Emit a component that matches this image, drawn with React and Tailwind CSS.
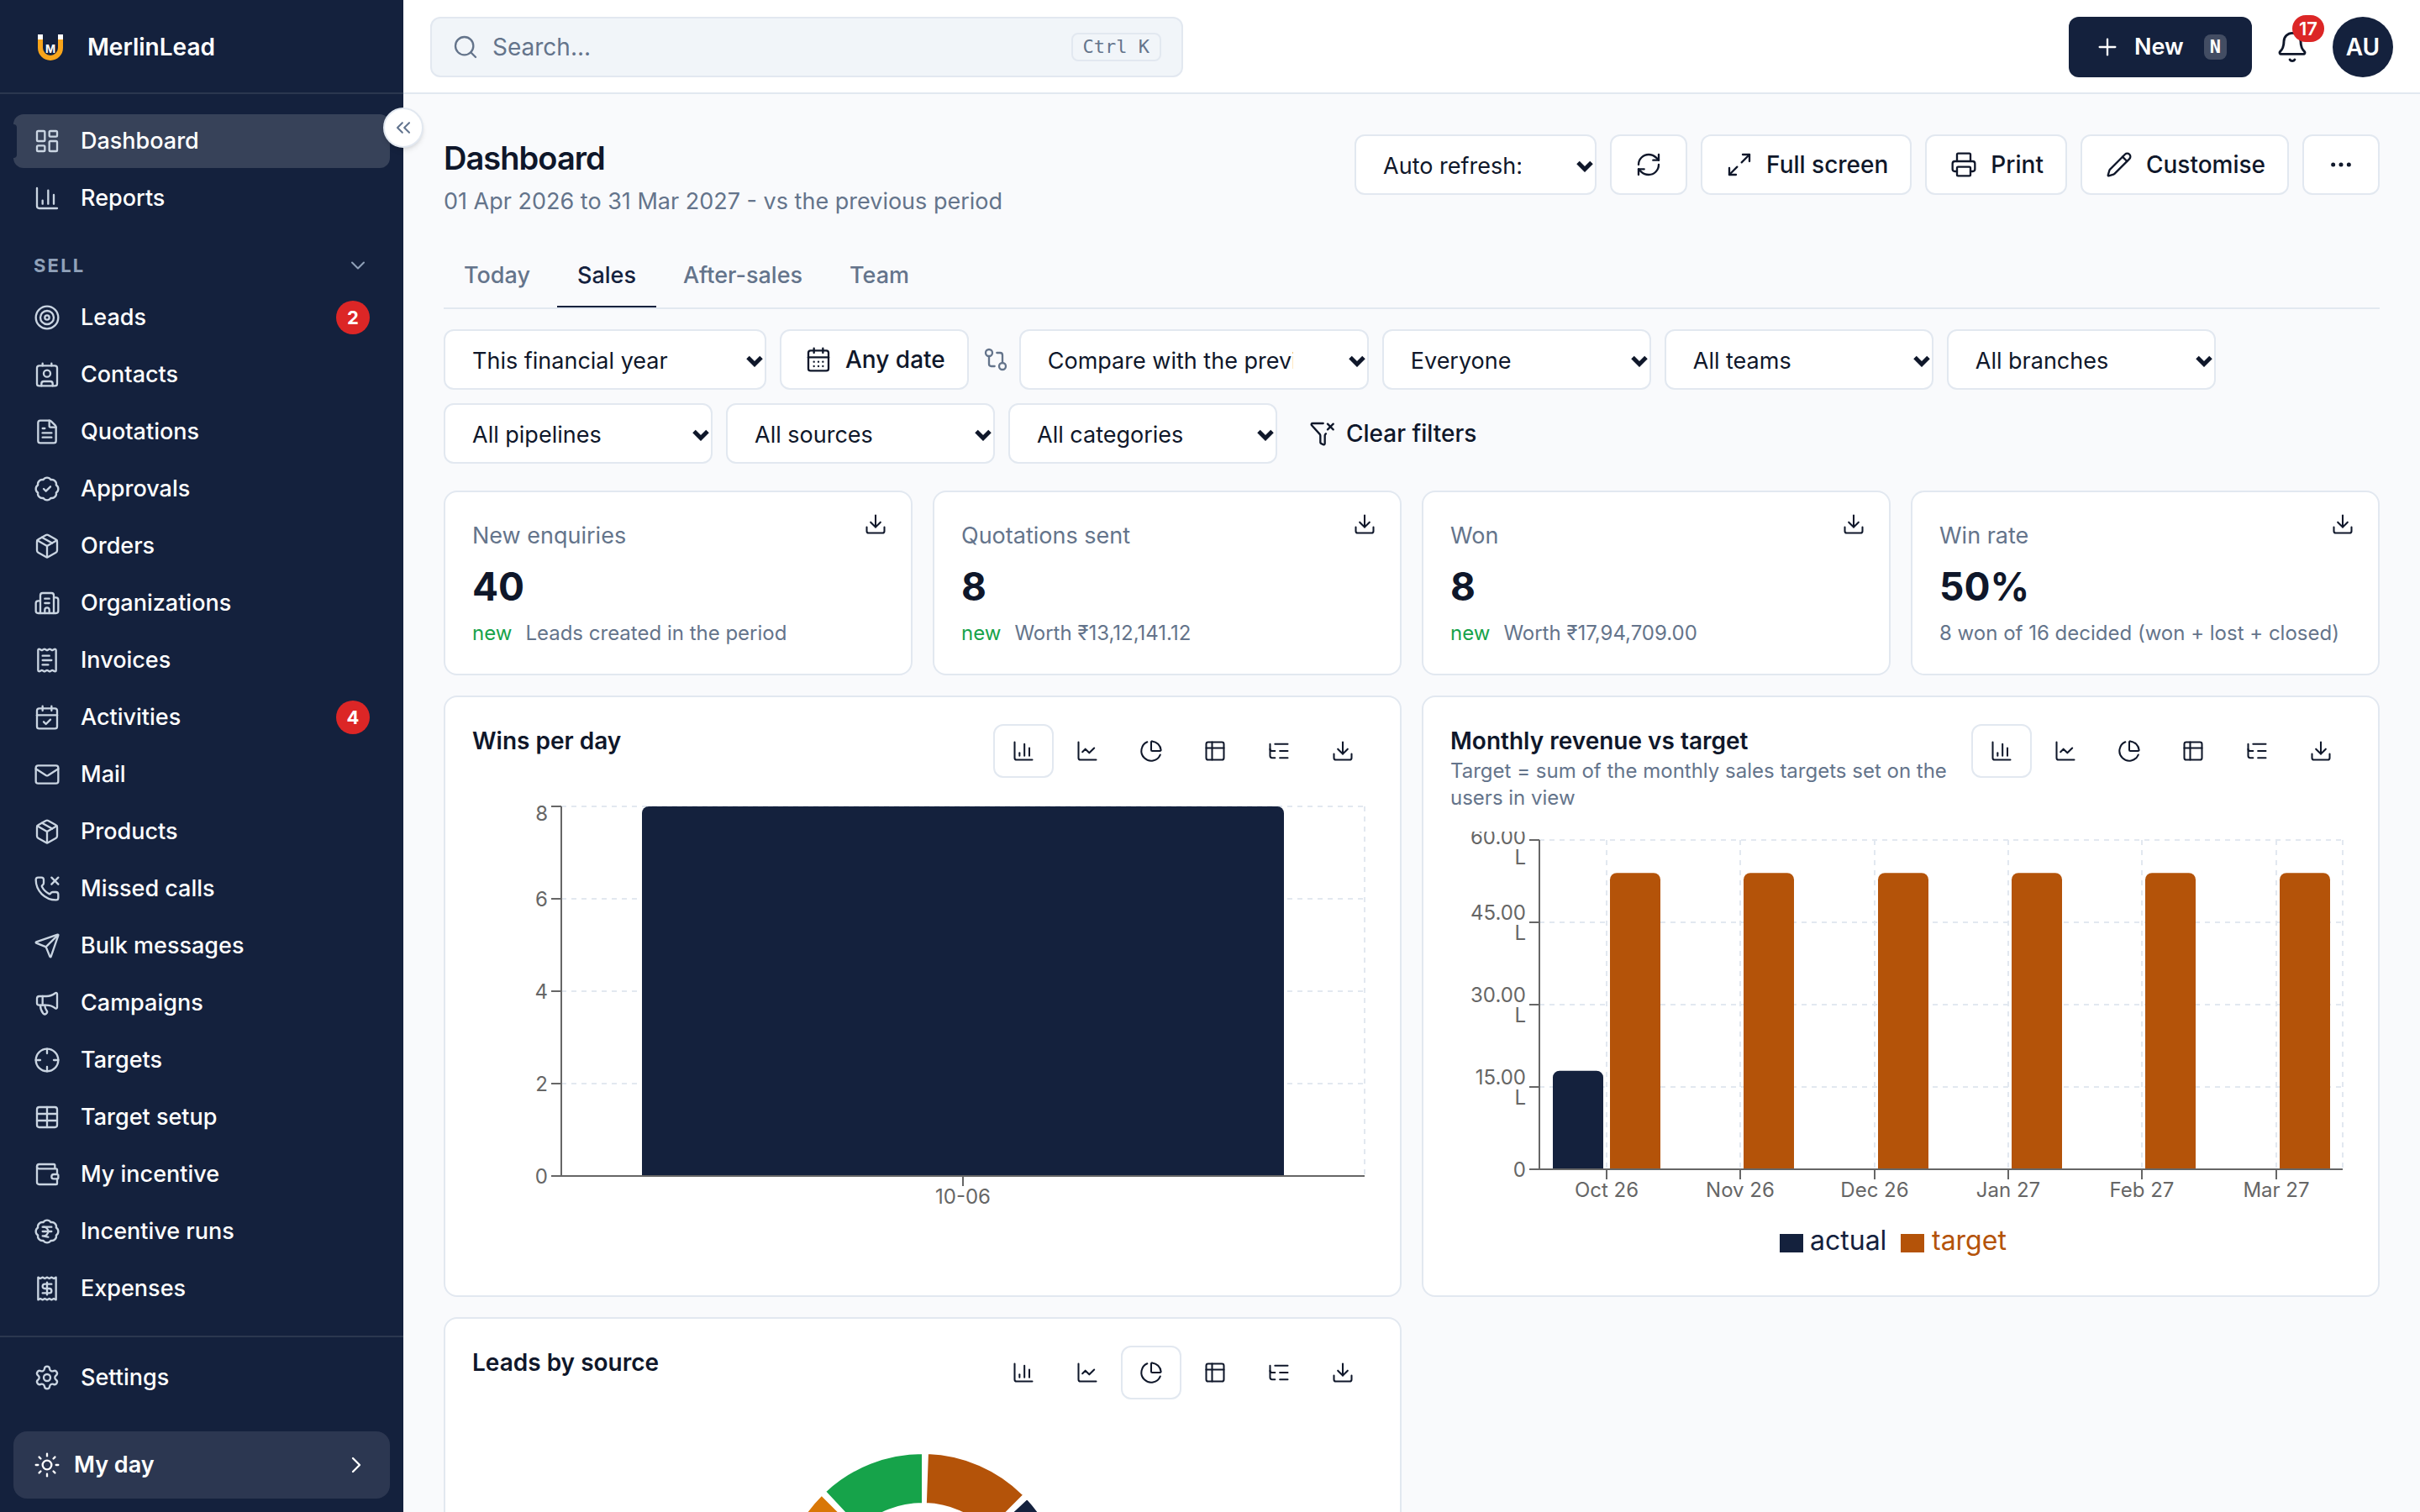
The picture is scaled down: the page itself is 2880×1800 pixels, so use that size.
import React, { useState } from "react";
import {
  BadgeCheck,
  BadgeIndianRupee,
  Bell,
  Building2,
  CalendarCheck,
  CalendarDays,
  ChartColumn,
  ChartLine,
  ChartPie,
  ChevronDown,
  ChevronRight,
  ChevronsLeft,
  Contact,
  Crosshair,
  Download,
  Ellipsis,
  FileText,
  FunnelX,
  GitCompare,
  LayoutDashboard,
  ListTree,
  Mail,
  Maximize2,
  Megaphone,
  Package,
  Pencil,
  PhoneMissed,
  Plus,
  Printer,
  Receipt,
  ReceiptText,
  RefreshCw,
  Search,
  Send,
  Settings,
  Sun,
  Table,
  Target,
  Wallet,
} from "lucide-react";

const mainLinks = [
  { label: "Dashboard", icon: LayoutDashboard, active: true },
  { label: "Reports", icon: ChartColumn },
];

const sellLinks = [
  { label: "Leads", icon: Target, badge: 2 },
  { label: "Contacts", icon: Contact },
  { label: "Quotations", icon: FileText },
  { label: "Approvals", icon: BadgeCheck },
  { label: "Orders", icon: Package },
  { label: "Organizations", icon: Building2 },
  { label: "Invoices", icon: ReceiptText },
  { label: "Activities", icon: CalendarCheck, badge: 4 },
  { label: "Mail", icon: Mail },
  { label: "Products", icon: Package },
  { label: "Missed calls", icon: PhoneMissed },
  { label: "Bulk messages", icon: Send },
  { label: "Campaigns", icon: Megaphone },
  { label: "Targets", icon: Crosshair },
  { label: "Target setup", icon: Table },
  { label: "My incentive", icon: Wallet },
  { label: "Incentive runs", icon: BadgeIndianRupee },
  { label: "Expenses", icon: Receipt },
];

const kpis = [
  { label: "New enquiries", value: "40", isNew: true, note: "Leads created in the period" },
  { label: "Quotations sent", value: "8", isNew: true, note: "Worth ₹13,12,141.12" },
  { label: "Won", value: "8", isNew: true, note: "Worth ₹17,94,709.00" },
  { label: "Win rate", value: "50%", note: "8 won of 16 decided (won + lost + closed)" },
];

const revenue = [
  { month: "Oct 26", actual: 17.95, target: 54 },
  { month: "Nov 26", actual: 0, target: 54 },
  { month: "Dec 26", actual: 0, target: 54 },
  { month: "Jan 27", actual: 0, target: 54 },
  { month: "Feb 27", actual: 0, target: 54 },
  { month: "Mar 27", actual: 0, target: 54 },
];

// angles in degrees, clockwise from twelve o'clock
const slices = [
  { from: 2, to: 45, color: "#b45309" },
  { from: 47, to: 122, color: "#14213d" },
  { from: 124, to: 180, color: "#0e7490" },
  { from: 182, to: 246, color: "#7c3aed" },
  { from: 248, to: 315, color: "#d97706" },
  { from: 317, to: 360, color: "#16a34a" },
];

function Logo() {
  return (
    <svg width="40" height="40" viewBox="0 0 40 40" aria-hidden="true">
      <path
        d="M8 8v13a12 12 0 0 0 24 0V8"
        fill="none"
        stroke="#f9a51a"
        strokeWidth="6"
      />
      <path d="M5 5h6v6H5zM29 5h6v6h-6z" fill="#fff" />
      <text x="20" y="27" textAnchor="middle" fill="#fff" className="text-[13px] font-bold">
        M
      </text>
    </svg>
  );
}

function TableIcon({ size = 28 }) {
  return (
    <svg
      width={size}
      height={size}
      viewBox="0 0 24 24"
      fill="none"
      stroke="currentColor"
      strokeWidth="1.75"
      strokeLinecap="round"
      strokeLinejoin="round"
    >
      <rect x="3" y="3" width="18" height="18" rx="2" />
      <path d="M3 9h18M9 3v18" />
    </svg>
  );
}

function NavLink({ item }) {
  const Icon = item.icon;
  return (
    <a
      href="#"
      className={`relative flex h-16 shrink-0 items-center gap-6 rounded-xl px-6 text-[27px] leading-[42px] font-medium text-white ${
        item.active ? "bg-[#374259]" : ""
      }`}
    >
      {item.active && (
        <span className="absolute top-3 bottom-3 left-0 w-1 rounded-r-full bg-[#14213d]" />
      )}
      <Icon size={32} strokeWidth={1.75} className="text-slate-300" />
      <span className="flex-1">{item.label}</span>
      {item.badge && (
        <span className="flex size-10 items-center justify-center rounded-full bg-[#dc2626] text-[22px] font-bold">
          {item.badge}
        </span>
      )}
    </a>
  );
}

function Sidebar() {
  return (
    <aside className="relative flex w-[480px] shrink-0 flex-col bg-[#14213d]">
      <div className="flex h-28 shrink-0 items-center gap-6 border-b-2 border-[#2b374f] px-10 pt-0.5">
        <Logo />
        <span className="text-[28px] font-semibold text-white">MerlinLead</span>
      </div>

      <button
        type="button"
        aria-label="Collapse sidebar"
        className="absolute top-32 -right-6 z-10 flex size-12 items-center justify-center rounded-full border-2 border-slate-200 bg-white text-slate-500 shadow-md"
      >
        <ChevronsLeft size={28} strokeWidth={1.75} />
      </button>

      <nav className="flex min-h-0 flex-1 flex-col gap-1 overflow-hidden px-4 pt-6">
        {mainLinks.map((item) => (
          <NavLink key={item.label} item={item} />
        ))}
        <button
          type="button"
          className="mt-6 mb-1.5 flex h-10 shrink-0 items-center justify-between px-6 text-[22px] font-bold tracking-widest text-slate-400"
        >
          SELL
          <ChevronDown size={28} strokeWidth={1.75} />
        </button>
        {sellLinks.map((item) => (
          <NavLink key={item.label} item={item} />
        ))}
      </nav>

      <div className="shrink-0 border-t-2 border-[#2b374f] p-4">
        <NavLink item={{ label: "Settings", icon: Settings }} />
        <a
          href="#"
          className="mt-8 flex h-20 items-center gap-4 rounded-2xl bg-[#2c3751] px-6 text-[27px] font-semibold text-white"
        >
          <Sun size={32} strokeWidth={1.75} />
          <span className="flex-1">My day</span>
          <ChevronRight size={32} strokeWidth={1.75} />
        </a>
      </div>
    </aside>
  );
}

function Topbar() {
  return (
    <header className="flex h-28 shrink-0 items-center justify-between border-b-2 border-slate-200 bg-white px-8 pt-0.5">
      <label className="flex h-[72px] w-[896px] items-center gap-4 rounded-xl border-2 border-slate-200 bg-slate-100 px-6 text-[#64748b]">
        <Search size={32} strokeWidth={1.75} />
        <input
          type="text"
          aria-label="Search"
          placeholder="Search..."
          className="min-w-0 flex-1 bg-transparent text-[28px] outline-none placeholder:text-[#64748b]"
        />
        <kbd className="rounded-lg border-2 border-slate-200 px-3 font-['DejaVu_Sans_Mono',monospace] text-[22px] leading-[30px]">
          Ctrl K
        </kbd>
      </label>

      <div className="flex items-center gap-2">
        <button
          type="button"
          className="flex h-[72px] items-center gap-4 rounded-xl bg-[#14213d] px-[30px] text-[27px] font-semibold text-white"
        >
          <Plus size={32} strokeWidth={1.75} />
          New
          <kbd className="ml-2 rounded-lg bg-white/20 px-[7px] font-['DejaVu_Sans_Mono',monospace] text-[22px] leading-[30px] font-bold">
            N
          </kbd>
        </button>
        <button
          type="button"
          aria-label="Notifications"
          className="relative flex h-[72px] w-20 items-center justify-center"
        >
          <Bell size={40} strokeWidth={1.75} />
          <span className="absolute -top-0.5 right-0.5 flex h-8 w-[38px] items-center justify-center rounded-full bg-[#dc2626] text-[22px] font-semibold text-white">
            17
          </span>
        </button>
        <button
          type="button"
          className="flex size-[72px] items-center justify-center rounded-full bg-[#14213d] text-[28px] font-semibold text-white"
        >
          AU
        </button>
      </div>
    </header>
  );
}

function SelectBox({ label, width, value }) {
  return (
    <div className={`relative h-[72px] ${width}`}>
      <select
        aria-label={label}
        defaultValue={value}
        className="h-full w-full appearance-none rounded-xl border-2 border-slate-200 bg-white pt-1 pr-[88px] pl-8 text-[27px] outline-none"
      >
        <option>{value}</option>
      </select>
      <svg
        width="20"
        height="14"
        viewBox="0 0 20 14"
        className="pointer-events-none absolute top-[31px] right-1"
        fill="none"
        stroke="currentColor"
        strokeWidth="5"
      >
        <path d="M2 2.5l8 8 8-8" />
      </svg>
    </div>
  );
}

function OutlineButton({ icon: Icon, label, children }) {
  return (
    <button
      type="button"
      aria-label={label}
      className={`flex h-[72px] items-center gap-4 rounded-xl border-2 border-slate-200 bg-white pl-7 text-[28px] font-medium ${
        children ? "pr-[26px]" : "pr-7"
      }`}
    >
      <Icon size={32} strokeWidth={1.75} />
      {children}
    </button>
  );
}

function PageHeader() {
  return (
    <div className="flex items-start justify-between">
      <div>
        <h1 className="text-[38px] leading-[56px] font-semibold tracking-tight">Dashboard</h1>
        <p className="mt-1 text-[27px] leading-[40px] text-[#64748b]">
          01 Apr 2026 to 31 Mar 2027 - vs the previous period
        </p>
      </div>
      <div className="flex gap-4">
        <SelectBox label="Auto refresh" width="w-[288px]" value="Auto refresh: off" />
        <OutlineButton icon={RefreshCw} label="Refresh" />
        <OutlineButton icon={Maximize2}>Full screen</OutlineButton>
        <OutlineButton icon={Printer}>Print</OutlineButton>
        <OutlineButton icon={Pencil}>Customise</OutlineButton>
        <OutlineButton icon={Ellipsis} label="More actions" />
      </div>
    </div>
  );
}

function Tabs() {
  const [tab, setTab] = useState("Sales");
  return (
    <div className="mt-7 flex gap-2 border-b-2 border-slate-200">
      {["Today", "Sales", "After-sales", "Team"].map((name) => (
        <button
          key={name}
          type="button"
          onClick={() => setTab(name)}
          className={`h-[78px] border-b-2 px-6 pt-1 text-[27px] leading-[42px] font-medium ${
            tab === name
              ? "border-[#14213d] text-[#14213d]"
              : "border-transparent text-[#64748b]"
          }`}
        >
          {name}
        </button>
      ))}
    </div>
  );
}

function Filters() {
  return (
    <div className="mt-6 flex flex-wrap gap-4">
      <SelectBox label="Period" width="w-[384px]" value="This financial year" />
      <OutlineButton icon={CalendarDays}>Any date</OutlineButton>
      <div className="flex items-center gap-3">
        <GitCompare size={32} strokeWidth={1.75} className="text-[#64748b]" />
        <SelectBox
          label="Compare"
          width="w-[416px]"
          value="Compare with the previous period"
        />
      </div>
      <SelectBox label="User" width="w-[320px]" value="Everyone" />
      <SelectBox label="Team" width="w-[320px]" value="All teams" />
      <SelectBox label="Branch" width="w-[320px]" value="All branches" />
      <SelectBox label="Pipeline" width="w-[320px]" value="All pipelines" />
      <SelectBox label="Source" width="w-[320px]" value="All sources" />
      <SelectBox label="Category" width="w-[320px]" value="All categories" />
      <button
        type="button"
        className="flex h-[72px] items-center gap-3 px-[22px] text-[28px] font-medium"
      >
        <FunnelX size={32} strokeWidth={1.75} />
        Clear filters
      </button>
    </div>
  );
}

function KpiCard({ kpi }) {
  return (
    <section className="relative rounded-2xl border-2 border-slate-200 bg-white p-8">
      <h2 className="text-[27px] leading-[40px] text-[#64748b]">{kpi.label}</h2>
      <p className="mt-2 text-[46px] leading-[64px] font-bold">{kpi.value}</p>
      <p className="mt-2 flex gap-4 text-[24px] leading-[32px] text-[#64748b]">
        {kpi.isNew && <span className="text-[#16a34a]">new</span>}
        {kpi.note}
      </p>
      <button type="button" aria-label="Download" className="absolute top-3 right-4 p-3">
        <Download size={28} strokeWidth={1.75} />
      </button>
    </section>
  );
}

const views = [
  { name: "bar", icon: ChartColumn },
  { name: "line", icon: ChartLine },
  { name: "pie", icon: ChartPie },
  { name: "table", icon: TableIcon },
  { name: "tree", icon: ListTree },
  { name: "download", icon: Download },
];

function ChartCard({ title, note, view, children }) {
  return (
    <section className="rounded-2xl border-2 border-slate-200 bg-white p-8">
      <div className="mb-6 flex items-start justify-between gap-4">
        <div>
          <h2 className="text-[28px] leading-[40px] font-semibold">{title}</h2>
          {note && <p className="text-[24px] leading-[32px] text-[#64748b]">{note}</p>}
        </div>
        <div className="flex shrink-0 gap-1">
          {views.map(({ name, icon: Icon }) => (
            <button
              key={name}
              type="button"
              aria-label={name}
              className={`flex h-16 w-[72px] items-center justify-center rounded-xl border-2 ${
                view === name ? "border-slate-200" : "border-transparent"
              }`}
            >
              <Icon size={28} strokeWidth={1.75} />
            </button>
          ))}
        </div>
      </div>
      {children}
    </section>
  );
}

// bar with only its top corners rounded
function barPath(x, top, width, bottom) {
  return `M${x} ${bottom}V${top + 8}a8 8 0 0 1 8 -8h${width - 16}a8 8 0 0 1 8 8V${bottom}z`;
}

function WinsChart() {
  const y = (v) => 450 - v * 55;
  return (
    <svg viewBox="0 0 1072 520" className="block w-full text-[24px]">
      <g stroke="#e2e8f0" strokeWidth="2" strokeDasharray="6 6">
        {[2, 4, 6, 8].map((v) => (
          <path key={v} d={`M106 ${y(v)}H1062`} />
        ))}
        <path d="M1062 10V450" />
      </g>
      <path d={barPath(202, 10, 764, 450)} fill="#14213d" />
      <g stroke="#666" strokeWidth="2">
        <path d="M106 10V450M106 450H1062M584 450v12" />
        {[0, 2, 4, 6, 8].map((v) => (
          <path key={v} d={`M94 ${y(v)}h12`} />
        ))}
      </g>
      <g fill="#666">
        {[0, 2, 4, 6, 8].map((v) => (
          <text key={v} x="90" y={Math.max(y(v) + 9, 27)} textAnchor="end">
            {v}
          </text>
        ))}
        <text x="584" y="483" textAnchor="middle">
          10-06
        </text>
      </g>
    </svg>
  );
}

function RevenueChart() {
  const y = (v) => 402 - (v * 98) / 15;
  const band = 956 / revenue.length;
  const x = (i) => Math.round(106 + band * i);
  const mid = Math.round(band / 2);
  return (
    <svg viewBox="0 0 1072 520" className="block w-full text-[24px]">
      <g stroke="#e2e8f0" strokeWidth="2" strokeDasharray="6 6">
        {[15, 30, 45, 60].map((v) => (
          <path key={v} d={`M106 ${y(v)}H1062`} />
        ))}
        {revenue.map((r, i) => (
          <path key={r.month} d={`M${x(i) + mid} 10V402`} />
        ))}
        <path d="M1062 10V402" />
      </g>
      {revenue.map((r, i) => (
        <g key={r.month}>
          {r.actual > 0 && <path d={barPath(x(i) + 16, y(r.actual), 60, 402)} fill="#14213d" />}
          <path d={barPath(x(i) + 84, y(r.target), 60, 402)} fill="#b45309" />
        </g>
      ))}
      <g stroke="#666" strokeWidth="2">
        <path d="M106 10V402M106 402H1062" />
        {[0, 15, 30, 45, 60].map((v) => (
          <path key={v} d={`M94 ${y(v)}h12`} />
        ))}
        {revenue.map((r, i) => (
          <path key={r.month} d={`M${x(i) + mid} 402v12`} />
        ))}
      </g>
      <g fill="#666">
        {[15, 30, 45, 60].map((v) => {
          const base = Math.max(y(v) - 3, 15);
          return (
            <text key={v} textAnchor="end">
              <tspan x="90" y={base}>
                {v}.00
              </tspan>
              <tspan x="90" y={base + 24}>
                L
              </tspan>
            </text>
          );
        })}
        <text x="90" y="411" textAnchor="end">
          0
        </text>
        {revenue.map((r, i) => (
          <text key={r.month} x={x(i) + mid} y="435" textAnchor="middle">
            {r.month}
          </text>
        ))}
      </g>
      <g className="text-[32px]">
        <rect x="392" y="479" width="28" height="22" fill="#14213d" />
        <text x="428" y="498" fill="#14213d">
          actual
        </text>
        <rect x="536" y="479" width="28" height="22" fill="#b45309" />
        <text x="573" y="498" fill="#b45309">
          target
        </text>
      </g>
    </svg>
  );
}

function ringSlice(from, to) {
  const point = (deg, r) => {
    const a = (deg * Math.PI) / 180;
    return `${536 + r * Math.sin(a)} ${210 - r * Math.cos(a)}`;
  };
  return `M${point(from, 170)}A170 170 0 0 1 ${point(to, 170)}L${point(to, 110)}A110 110 0 0 0 ${point(from, 110)}z`;
}

function SourceChart() {
  return (
    <svg viewBox="0 0 1072 520" className="block w-full">
      {slices.map((s) => (
        <path
          key={s.color}
          d={ringSlice(s.from, s.to)}
          fill={s.color}
          stroke="#fff"
          strokeWidth="2"
        />
      ))}
    </svg>
  );
}

export default function App() {
  return (
    <div className="flex h-screen overflow-hidden bg-[#f9fafc] font-[Inter,sans-serif] text-[#0f172a]">
      <Sidebar />
      <div className="flex min-w-0 flex-1 flex-col">
        <Topbar />
        <main className="min-h-0 flex-1 overflow-hidden p-12">
          <PageHeader />
          <Tabs />
          <Filters />
          <div className="mt-8 grid grid-cols-4 gap-6">
            {kpis.map((kpi) => (
              <KpiCard key={kpi.label} kpi={kpi} />
            ))}
          </div>
          <div className="mt-6 grid grid-cols-2 gap-6">
            <ChartCard title="Wins per day" view="bar">
              <WinsChart />
            </ChartCard>
            <ChartCard
              title="Monthly revenue vs target"
              note="Target = sum of the monthly sales targets set on the users in view"
              view="bar"
            >
              <RevenueChart />
            </ChartCard>
            <ChartCard title="Leads by source" view="pie">
              <SourceChart />
            </ChartCard>
          </div>
        </main>
      </div>
    </div>
  );
}
